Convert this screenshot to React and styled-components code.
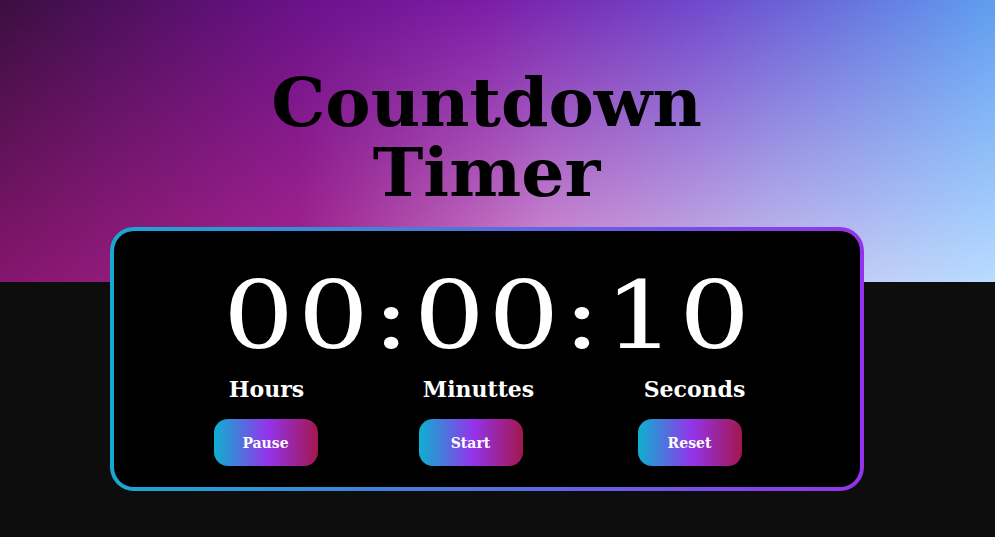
import React from "react"
import styled, { createGlobalStyle } from "styled-components"

const GlobalStyle = createGlobalStyle`
    html, body {
        margin: 0;
        padding: 0;
        background: #0d0d0d;
        font-family: "DejaVu Serif", Georgia, serif;
    }
`;

const Page = styled.div`
    position: relative;
    width: 100%;
    height: 537px;
    overflow: hidden;
    background: #0d0d0d;
`;

const Sky = styled.div`
    position: absolute;
    left: 0;
    top: 0;
    width: 100%;
    height: 282px;
    background: linear-gradient(to right, #3b0f40 0%, #6a128a 30%, #7c1ca6 48%, #7048cc 70%, #5f9ef0 100%);
    &::after {
        content: "";
        position: absolute;
        inset: 0;
        background: linear-gradient(to right, #85166e 0%, #a8248e 30%, #d896d4 55%, #c8c4f0 78%, #b8dcff 100%);
        -webkit-mask-image: linear-gradient(to bottom, transparent 0%, black 100%);
        mask-image: linear-gradient(to bottom, transparent 0%, black 100%);
    }
`;

const Content = styled.main`
    position: relative;
    z-index: 1;
    display: flex;
    flex-direction: column;
    align-items: center;
    padding-top: 67px;
    margin-left: -22px;
`;

const Title = styled.h1`
    margin: 0 0 20px 0;
    font-family: "DejaVu Serif", Georgia, serif;
    font-weight: bold;
    font-size: 68px;
    line-height: 70px;
    text-align: center;
    color: #000;
    width: 480px;
`;

const Card = styled.section`
    width: 754px;
    box-sizing: border-box;
    border-radius: 24px;
    padding: 4px;
    background: linear-gradient(to right, #17a9d2, #5b6be0 55%, #9333ea);
`;

const Inner = styled.div`
    background: #000;
    border-radius: 20px;
    padding: 38px 0 21px 0;
    display: flex;
    flex-direction: column;
    align-items: center;
`;

const Clock = styled.div`
    font-family: "DejaVu Serif", Georgia, serif;
    font-size: 94px;
    line-height: 94px;
    color: #fff;
    letter-spacing: 3px;
    padding-left: 3px;
    margin-bottom: 13px;
    transform: scaleX(1.19);
`;

const Grid = styled.div`
    align-self: flex-start;
    margin-left: 47px;
    display: grid;
    grid-template-columns: 210px 200px 238px;
    row-gap: 17px;
    justify-items: center;
`;

const Label = styled.div`
    font-family: "DejaVu Serif", Georgia, serif;
    font-weight: bold;
    font-size: 22px;
    line-height: 26px;
    color: #fff;
    transform: translateX(${p => p.shift || 0}px);
`;

const Button = styled.button`
    width: 104px;
    height: 47px;
    border: none;
    border-radius: 14px;
    background: linear-gradient(to right, #0eb0d0, #9333ea 52%, #a3174f);
    color: #fff;
    font-family: "DejaVu Serif", Georgia, serif;
    font-weight: bold;
    font-size: 14px;
    cursor: pointer;
`;

const units = [
    { label: "Hours", action: "Pause", shift: 1 },
    { label: "Minuttes", action: "Start", shift: 8 },
    { label: "Seconds", action: "Reset", shift: 5 },
];

const App = () => (
    <Page>
        <GlobalStyle />
        <Sky />
        <Content>
            <Title>Countdown Timer</Title>
            <Card>
                <Inner>
                    <Clock>00:00:10</Clock>
                    <Grid>
                        {units.map(u => (
                            <Label key={u.label} shift={u.shift}>{u.label}</Label>
                        ))}
                        {units.map(u => (
                            <Button key={u.action}>{u.action}</Button>
                        ))}
                    </Grid>
                </Inner>
            </Card>
        </Content>
    </Page>
);

export default App;
